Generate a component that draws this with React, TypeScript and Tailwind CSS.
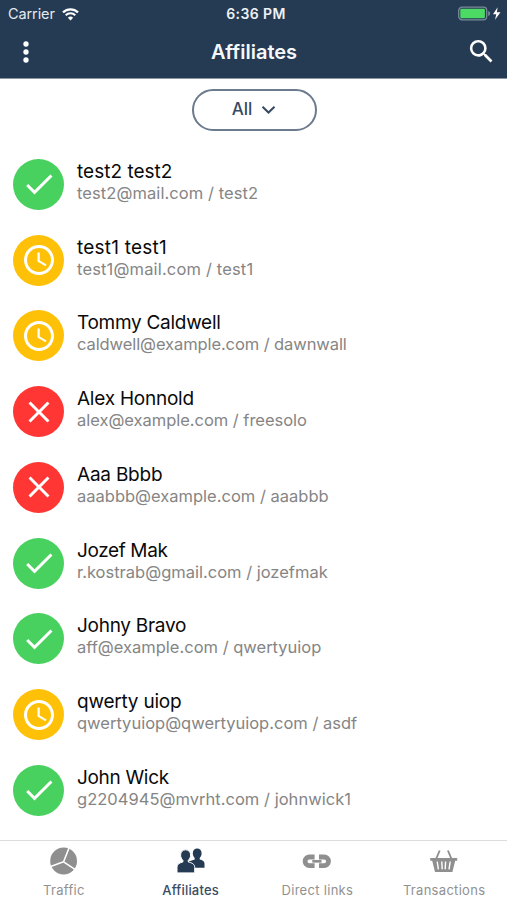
import React from "react";

type Status = "approved" | "pending" | "declined";

interface Affiliate {
  name: string;
  info: string;
  status: Status;
  nameSpacing: string;
  infoSpacing: string;
}

const affiliates: Affiliate[] = [
  { name: "test2 test2", info: "test2@mail.com / test2", status: "approved", nameSpacing: "tracking-[0.02px]", infoSpacing: "tracking-[0.08px]" },
  { name: "test1 test1", info: "test1@mail.com / test1", status: "pending", nameSpacing: "tracking-[0.22px]", infoSpacing: "tracking-[0.16px]" },
  { name: "Tommy Caldwell", info: "caldwell@example.com / dawnwall", status: "pending", nameSpacing: "tracking-[-0.28px]", infoSpacing: "tracking-[-0.09px]" },
  { name: "Alex Honnold", info: "alex@example.com / freesolo", status: "declined", nameSpacing: "tracking-[-0.24px]", infoSpacing: "tracking-[-0.03px]" },
  { name: "Aaa Bbbb", info: "aaabbb@example.com / aaabbb", status: "declined", nameSpacing: "tracking-[-0.22px]", infoSpacing: "tracking-normal" },
  { name: "Jozef Mak", info: "r.kostrab@gmail.com / jozefmak", status: "approved", nameSpacing: "tracking-[-0.38px]", infoSpacing: "tracking-normal" },
  { name: "Johny Bravo", info: "aff@example.com / qwertyuiop", status: "approved", nameSpacing: "tracking-[-0.28px]", infoSpacing: "tracking-normal" },
  { name: "qwerty uiop", info: "qwertyuiop@qwertyuiop.com / asdf", status: "pending", nameSpacing: "tracking-[-0.22px]", infoSpacing: "tracking-normal" },
  { name: "John Wick", info: "g2204945@mvrht.com / johnwick1", status: "approved", nameSpacing: "tracking-[-0.32px]", infoSpacing: "tracking-[0.03px]" },
];

const statusColors: Record<Status, string> = {
  approved: "bg-[#48d15f]",
  pending: "bg-[#ffc107]",
  declined: "bg-[#ff3633]",
};

const statusPaths: Record<Status, string> = {
  approved: "M9 16.17 4.83 12l-1.42 1.41L9 19 21 7l-1.41-1.41z",
  pending:
    "M11.99 2C6.47 2 2 6.48 2 12s4.47 10 9.99 10C17.52 22 22 17.52 22 12S17.52 2 11.99 2zM12 20c-4.42 0-8-3.58-8-8s3.58-8 8-8 8 3.58 8 8-3.58 8-8 8zm.5-13H11v6l5.25 3.15.75-1.23-4.5-2.67z",
  declined:
    "M19 6.41 17.59 5 12 10.59 6.41 5 5 6.41 10.59 12 5 17.59 6.41 19 12 13.41 17.59 19 19 17.59 13.41 12z",
};

const StatusBar: React.FC = () => (
  <div className="grid h-[27px] grid-cols-3 items-center text-white">
    <div className="flex items-center gap-[7px] pt-px pl-[8px]">
      <span className="text-[14.5px] leading-none tracking-[-0.1px] text-[#e4e9ee]">Carrier</span>
      <svg width="17" height="13" viewBox="0 0 17 13" fill="none" stroke="currentColor">
        <path d="M1 4.4a10.8 10.8 0 0 1 15 0" strokeWidth="2.2" />
        <path d="M3.7 7.3a6.9 6.9 0 0 1 9.6 0" strokeWidth="2" />
        <path d="M8.5 12.4 5.9 9.7a3.8 3.8 0 0 1 5.2 0z" fill="currentColor" stroke="none" />
      </svg>
    </div>
    <span className="pt-px pl-[5px] text-center text-[14px] leading-none font-semibold tracking-[0.4px] text-[#eef1f4]">
      6:36 PM
    </span>
    <div className="flex items-center justify-end pr-[6px]">
      <svg width="43" height="16" viewBox="0 0 43 16">
        <rect x="0.7" y="1.2" width="28" height="12.6" rx="3.4" fill="none" stroke="#7b8b9b" strokeWidth="1.3" />
        <rect x="2.3" y="2.8" width="24.6" height="9.4" rx="1.2" fill="#4cd964" />
        <path d="M30.2 5.1c1.4.4 1.9 1.3 1.9 2.4s-.5 2-1.9 2.4z" fill="#7b8b9b" />
        <path d="M39.6 1.2 35 8.3h3.3L37 13.8l5.5-7.6h-3.6z" fill="#fff" />
      </svg>
    </div>
  </div>
);

const Header: React.FC = () => (
  <header className="h-[79px] shrink-0 border-b border-[#8a94a3] bg-[#253b54]">
    <StatusBar />
    <div className="flex h-[50px] items-center justify-between px-[10px] text-white">
      <button aria-label="Menu">
        <svg width="32" height="32" viewBox="0 0 24 24" fill="currentColor">
          <circle cx="12" cy="6" r="2" />
          <circle cx="12" cy="12" r="2" />
          <circle cx="12" cy="18" r="2" />
        </svg>
      </button>
      <h1 className="text-[20px] font-[560] text-[#f6f8fa]">Affiliates</h1>
      <button aria-label="Search" className="pb-[2px]">
        <svg width="31" height="31" viewBox="0 0 24 24" fill="currentColor">
          <path d="M15.5 14h-.79l-.28-.27A6.471 6.471 0 0 0 16 9.5 6.5 6.5 0 1 0 9.5 16c1.61 0 3.09-.59 4.23-1.57l.27.28v.79l5 4.99L20.49 19l-4.99-5zm-6 0C7.01 14 5 11.99 5 9.5S7.01 5 9.5 5 14 7.01 14 9.5 11.99 14 9.5 14z" />
        </svg>
      </button>
    </div>
  </header>
);

const AffiliateRow: React.FC<{ item: Affiliate }> = ({ item }) => (
  <li className="flex h-[75.75px] items-center gap-[13px] pl-[13px]">
    <span
      className={`flex size-[51px] shrink-0 items-center justify-center rounded-full text-white ${statusColors[item.status]}`}
    >
      <svg width="36" height="36" viewBox="0 0 24 24" fill="currentColor">
        <path d={statusPaths[item.status]} />
      </svg>
    </span>
    <div className="pb-[4.2px] whitespace-nowrap">
      <p className={`text-[19px] leading-[22px] text-[#0a0a0a] ${item.nameSpacing}`}>{item.name}</p>
      <p className={`text-[16.5px] leading-[21px] text-[#858585] ${item.infoSpacing}`}>{item.info}</p>
    </div>
  </li>
);

const tabs = [
  {
    label: "Traffic",
    icon: (
      <svg width="30" height="28" viewBox="0 0 30 28">
        <circle cx="14.6" cy="14" r="13.4" fill="#8f8f90" />
        <path d="M14.6 14.8 20 1M14.6 14.8 1 19.7M14.6 14.8 26 22.3" stroke="#fff" strokeWidth="1.6" />
      </svg>
    ),
  },
  {
    label: "Affiliates",
    active: true,
    icon: (
      <svg width="30" height="28" viewBox="0 0 30 28" fill="#253b54">
        <path d="M21.2 1.6c2.6 0 4.4 1.9 4.4 4.6 0 2-.8 3.8-1.9 4.7v1.5c3 .6 4.800 1.700 4.800 4.300v4H12v-6l6.700-2.300v-1.500c-1.100-.9-1.900-2.700-1.900-4.700 0-2.700 1.800-4.600 4.400-4.600z" />
        <path
          d="M9.6 2.800c3 0 5 2.200 5 5.200 0 2.200-.9 4.100-2.300 5.200v1.800c3.700.8 6.400 2.200 6.400 5.300v5.600H1v-5.600c0-3.100 2.400-4.500 5.900-5.300v-1.800C5.500 12.100 4.600 10.200 4.600 8c0-3 2-5.200 5-5.200z"
          stroke="#fff"
          strokeWidth="1"
        />
      </svg>
    ),
  },
  {
    label: "Direct links",
    icon: (
      <svg width="30" height="28" viewBox="0 0 30 28" fill="none" stroke="#8f8f90" strokeWidth="4.8">
        <path d="M12.6 10H7.400a4.300 4.300 0 0 0 0 8.600h5.200M17 10h5.200a4.300 4.300 0 0 1 0 8.600H17" />
        <path d="M10.300 14.300h9.200" strokeWidth="2.700" />
      </svg>
    ),
  },
  {
    label: "Transactions",
    icon: (
      <svg width="30" height="28" viewBox="0 0 30 28">
        <path d="M7.3 11.500 10.700 3.500M22.300 11.500 18.900 3.500" stroke="#8f8f90" strokeWidth="1.9" />
        <path d="M1.200 11h27v2.800h-2L23.400 25H6L3.200 13.800h-2z" fill="#8f8f90" />
        <path d="M8.200 14.500 9.400 22.300M12.800 14.500l.4 7.800M16.600 14.500l-.4 7.800M21.200 14.500 20 22.300" stroke="#fff" strokeWidth="1.4" />
      </svg>
    ),
  },
];

const TabBar: React.FC = () => (
  <nav className="grid h-[60px] shrink-0 grid-cols-4 border-t border-[#dcdcdc] bg-white">
    {tabs.map((tab) => (
      <button key={tab.label} className="flex flex-col items-center pt-[6px] pl-px">
        {tab.icon}
        <span
          className={`mt-[7px] text-[13px] leading-[17px] ${
            tab.active ? "font-medium tracking-[0.2px] text-[#3a4d63]" : "tracking-[0.3px] text-[#919191]"
          }`}
        >
          {tab.label}
        </span>
      </button>
    ))}
  </nav>
);

const App: React.FC = () => {
  return (
    <div className="flex h-[900px] w-[507px] flex-col overflow-hidden bg-white font-['Inter',sans-serif]">
      <Header />
      <main className="min-h-0 flex-1">
        <div className="flex justify-center pt-[10px] pl-px">
          <button className="flex h-[42px] w-[125px] items-center justify-center gap-[9px] rounded-full border-2 border-[#6b7a8d] text-[17px] font-medium tracking-[-0.1px] text-[#364a61]">
            All
            <svg width="15" height="10" viewBox="0 0 15 10" fill="none" stroke="currentColor" strokeWidth="2">
              <path d="m1.5 1.7 6 5.8 6-5.8" />
            </svg>
          </button>
        </div>
        <ul className="pt-[15.5px]">
          {affiliates.map((item) => (
            <AffiliateRow key={item.info} item={item} />
          ))}
        </ul>
      </main>
      <TabBar />
    </div>
  );
};

export default App;
